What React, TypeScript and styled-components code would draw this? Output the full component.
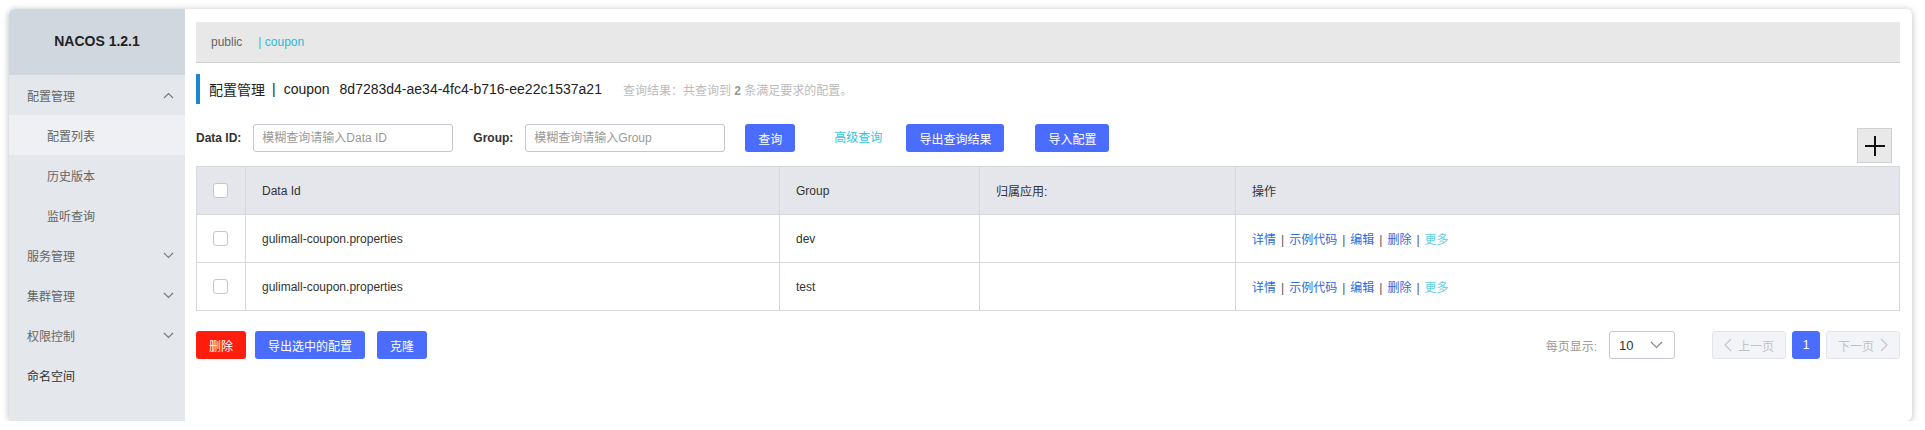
import React from 'react';
import styled, { createGlobalStyle } from 'styled-components';

const GlobalStyle = createGlobalStyle`
    body {
        margin: 0;
        background: #fff;
        font-family: "Liberation Sans", Arial, "Noto Sans CJK SC", sans-serif;
        font-size: 12px;
        color: #333;
    }
`;

const Chevron = ({ up }: { up?: boolean }) => (
    <svg width="11" height="7" viewBox="0 0 11 7">
        <polyline
            points={up ? '1,6 5.5,1.5 10,6' : '1,1 5.5,5.5 10,1'}
            fill="none"
            stroke="#777"
            strokeWidth="1.1"
        />
    </svg>
);

const PageArrow = ({ dir }: { dir: 'left' | 'right' }) => (
    <svg width="8" height="14" viewBox="0 0 8 14">
        <polyline
            points={dir === 'left' ? '7,1 1,7 7,13' : '1,1 7,7 1,13'}
            fill="none"
            stroke="#c4c6cc"
            strokeWidth="1.2"
        />
    </svg>
);

const menu = [
    { label: '配置管理', open: true, children: ['配置列表', '历史版本', '监听查询'] },
    { label: '服务管理', arrow: true },
    { label: '集群管理', arrow: true },
    { label: '权限控制', arrow: true },
    { label: '命名空间' },
];

const rows = [
    { dataId: 'gulimall-coupon.properties', group: 'dev' },
    { dataId: 'gulimall-coupon.properties', group: 'test' },
];

const App = () => {
    return (
        <>
            <GlobalStyle />
            <Window>
                <Sidebar>
                    <Brand>NACOS 1.2.1</Brand>
                    {menu.map((m) => (
                        <React.Fragment key={m.label}>
                            <MenuItem $strong={!m.open && !m.arrow}>
                                {m.label}
                                {m.open && <Chevron up />}
                                {m.arrow && <Chevron />}
                            </MenuItem>
                            {m.children?.map((c, i) => (
                                <SubItem key={c} $active={i === 0}>{c}</SubItem>
                            ))}
                        </React.Fragment>
                    ))}
                </Sidebar>
                <Main>
                    <Breadcrumb>
                        <span>public</span>
                        <Crumb>| coupon</Crumb>
                    </Breadcrumb>
                    <TitleRow>
                        <span>配置管理</span>
                        <TitlePipe>|</TitlePipe>
                        <span>coupon</span>
                        <TitleId>8d7283d4-ae34-4fc4-b716-ee22c1537a21</TitleId>
                        <Hint>查询结果：共查询到 <b>2</b> 条满足要求的配置。</Hint>
                    </TitleRow>
                    <SearchRow>
                        <Label>Data ID:</Label>
                        <Input placeholder="模糊查询请输入Data ID" />
                        <Label>Group:</Label>
                        <Input placeholder="模糊查询请输入Group" />
                        <Button>查询</Button>
                        <TextLink>高级查询</TextLink>
                        <Button>导出查询结果</Button>
                        <Button $gap={31}>导入配置</Button>
                        <AddButton>
                            <svg width="22" height="22" viewBox="0 0 22 22">
                                <path d="M11 1V21M1 11H21" stroke="#111" strokeWidth="2" />
                            </svg>
                        </AddButton>
                    </SearchRow>
                    <Table>
                        <colgroup>
                            <col style={{ width: 49 }} />
                            <col style={{ width: 534 }} />
                            <col style={{ width: 200 }} />
                            <col style={{ width: 256 }} />
                            <col />
                        </colgroup>
                        <thead>
                            <tr>
                                <Th><Checkbox /></Th>
                                <Th>Data Id</Th>
                                <Th>Group</Th>
                                <Th>归属应用:</Th>
                                <Th>操作</Th>
                            </tr>
                        </thead>
                        <tbody>
                            {rows.map((r) => (
                                <tr key={r.group}>
                                    <Td><Checkbox /></Td>
                                    <Td>{r.dataId}</Td>
                                    <Td>{r.group}</Td>
                                    <Td />
                                    <Td>
                                        <Action>详情</Action><Sep>|</Sep>
                                        <Action>示例代码</Action><Sep>|</Sep>
                                        <Action>编辑</Action><Sep>|</Sep>
                                        <Action>删除</Action><Sep>|</Sep>
                                        <Action $more>更多</Action>
                                    </Td>
                                </tr>
                            ))}
                        </tbody>
                    </Table>
                    <Footer>
                        <FooterLeft>
                            <Button $danger>删除</Button>
                            <Button>导出选中的配置</Button>
                            <Button $gap={3}>克隆</Button>
                        </FooterLeft>
                        <Pager>
                            <PageLabel>每页显示:</PageLabel>
                            <Select>
                                <span>10</span>
                                <svg width="13" height="8" viewBox="0 0 13 8">
                                    <polyline points="1,1 6.5,6.5 12,1" fill="none" stroke="#888" strokeWidth="1.2" />
                                </svg>
                            </Select>
                            <PageButton $disabled>
                                <PageArrow dir="left" />
                                上一页
                            </PageButton>
                            <PageButton $current>1</PageButton>
                            <PageButton $disabled>
                                下一页
                                <PageArrow dir="right" />
                            </PageButton>
                        </Pager>
                    </Footer>
                </Main>
            </Window>
        </>
    );
};

const Window = styled.div`
    display: flex;
    margin: 9px 13px 0 9px;
    height: 412px;
    border-radius: 6px;
    overflow: hidden;
    background: #fff;
    box-shadow: 0 1px 7px rgba(0, 0, 0, 0.28);
`;

const Sidebar = styled.div`
    width: 176px;
    flex-shrink: 0;
    background: #e4e7ec;
    display: flex;
    flex-direction: column;
`;

const Brand = styled.div`
    height: 66px;
    display: flex;
    align-items: center;
    justify-content: center;
    background: #d1d7df;
    font-size: 14px;
    font-weight: bold;
    color: #222;
    padding-bottom: 3px;
    box-sizing: border-box;
`;

const MenuItem = styled.div<{ $strong?: boolean }>`
    height: 40px;
    display: flex;
    align-items: center;
    justify-content: space-between;
    padding: 0 11px 0 18px;
    color: ${(p) => (p.$strong ? '#333' : '#666')};
    font-size: 12px;
`;

const SubItem = styled.div<{ $active?: boolean }>`
    height: 40px;
    display: flex;
    align-items: center;
    padding-left: 38px;
    color: #666;
    font-size: 12px;
    background: ${(p) => (p.$active ? '#eef0f4' : 'transparent')};
`;

const Main = styled.div`
    flex: 1;
    padding: 13px 12px 0 11px;
    display: flex;
    flex-direction: column;
`;

const Breadcrumb = styled.div`
    height: 41px;
    box-sizing: border-box;
    background: #e8e8e8;
    border-bottom: 1px solid #cfcfcf;
    display: flex;
    align-items: center;
    padding-left: 15px;
    gap: 16px;
    color: #666;
    font-size: 12px;
`;

const Crumb = styled.span`
    color: #2fb8d6;
`;

const TitleRow = styled.div`
    margin-top: 11px;
    height: 30px;
    border-left: 4px solid #1c88cf;
    padding-left: 9px;
    display: flex;
    align-items: center;
    font-size: 14px;
    color: #222;
`;

const TitlePipe = styled.span`
    margin: 0 8px 0 7px;
`;

const TitleId = styled.span`
    margin-left: 10px;
`;

const Hint = styled.span`
    margin-left: 21px;
    font-size: 12px;
    color: #bbb;
    b {
        color: #999;
    }
`;

const SearchRow = styled.div`
    margin-top: 20px;
    height: 39px;
    display: flex;
    align-items: flex-start;
`;

const Label = styled.span`
    height: 28px;
    line-height: 28px;
    font-weight: bold;
    color: #333;
    margin-right: 12px;
`;

const Input = styled.input`
    width: 200px;
    height: 28px;
    box-sizing: border-box;
    border: 1px solid #c4c6cf;
    border-radius: 3px;
    padding: 0 8px;
    margin-right: 20px;
    font-family: inherit;
    font-size: 12px;
    outline: none;
    &::placeholder {
        color: #999;
    }
`;

const Button = styled.button<{ $danger?: boolean; $gap?: number }>`
    height: 28px;
    padding: 0 13px;
    border: none;
    border-radius: 3px;
    background: ${(p) => (p.$danger ? '#ff1d0d' : '#4a6cff')};
    color: #fff;
    font-family: inherit;
    font-size: 12px;
    margin-left: ${(p) => p.$gap ?? 0}px;
    cursor: pointer;
`;

const TextLink = styled.span`
    height: 28px;
    line-height: 28px;
    color: #33c3dd;
    margin: 0 24px 0 39px;
`;

const AddButton = styled.div`
    margin: 4px 8px 0 auto;
    width: 35px;
    height: 35px;
    box-sizing: border-box;
    background: #e9e9e9;
    border: 1px solid #d0d0d0;
    display: flex;
    align-items: center;
    justify-content: center;
`;

const Table = styled.table`
    margin-top: 3px;
    width: 100%;
    table-layout: fixed;
    border-collapse: collapse;
    border: 1px solid #d6d8de;
`;

const Th = styled.th`
    height: 47px;
    background: #e4e6eb;
    border: 1px solid #d6d8de;
    text-align: left;
    font-weight: normal;
    padding: 0 16px;
    color: #333;
    font-size: 12px;
`;

const Td = styled.td`
    height: 47px;
    border: 1px solid #d6d8de;
    padding: 0 16px;
    color: #333;
    font-size: 12px;
`;

const Checkbox = styled.span`
    display: block;
    width: 15px;
    height: 15px;
    box-sizing: border-box;
    border: 1px solid #c4c6cf;
    border-radius: 3px;
    background: #fff;
`;

const Action = styled.span<{ $more?: boolean }>`
    color: ${(p) => (p.$more ? '#5bcfe6' : '#2f6ad8')};
`;

const Sep = styled.span`
    color: #555;
    margin: 0 5px;
`;

const Footer = styled.div`
    margin-top: 20px;
    display: flex;
    justify-content: space-between;
    align-items: center;
`;

const FooterLeft = styled.div`
    display: flex;
    gap: 9px;
`;

const Pager = styled.div`
    display: flex;
    align-items: center;
`;

const PageLabel = styled.span`
    color: #999;
    margin-right: 12px;
`;

const Select = styled.div`
    width: 66px;
    height: 28px;
    box-sizing: border-box;
    border: 1px solid #c4c6cf;
    border-radius: 3px;
    display: flex;
    align-items: center;
    justify-content: space-between;
    padding: 0 11px 0 9px;
    font-size: 13px;
    color: #333;
    margin-right: 31px;
`;

const PageButton = styled.div<{ $disabled?: boolean; $current?: boolean }>`
    height: 28px;
    box-sizing: border-box;
    min-width: 28px;
    padding: 0 ${(p) => (p.$current ? 0 : 11)}px;
    display: flex;
    align-items: center;
    justify-content: center;
    gap: 6px;
    border-radius: 3px;
    margin-left: 6px;
    border: 1px solid ${(p) => (p.$current ? '#4a6cff' : '#e3e4e8')};
    background: ${(p) => (p.$current ? '#4a6cff' : '#f3f4f7')};
    color: ${(p) => (p.$current ? '#fff' : '#c1c3c8')};
    font-size: 12px;
`;

export default App;
